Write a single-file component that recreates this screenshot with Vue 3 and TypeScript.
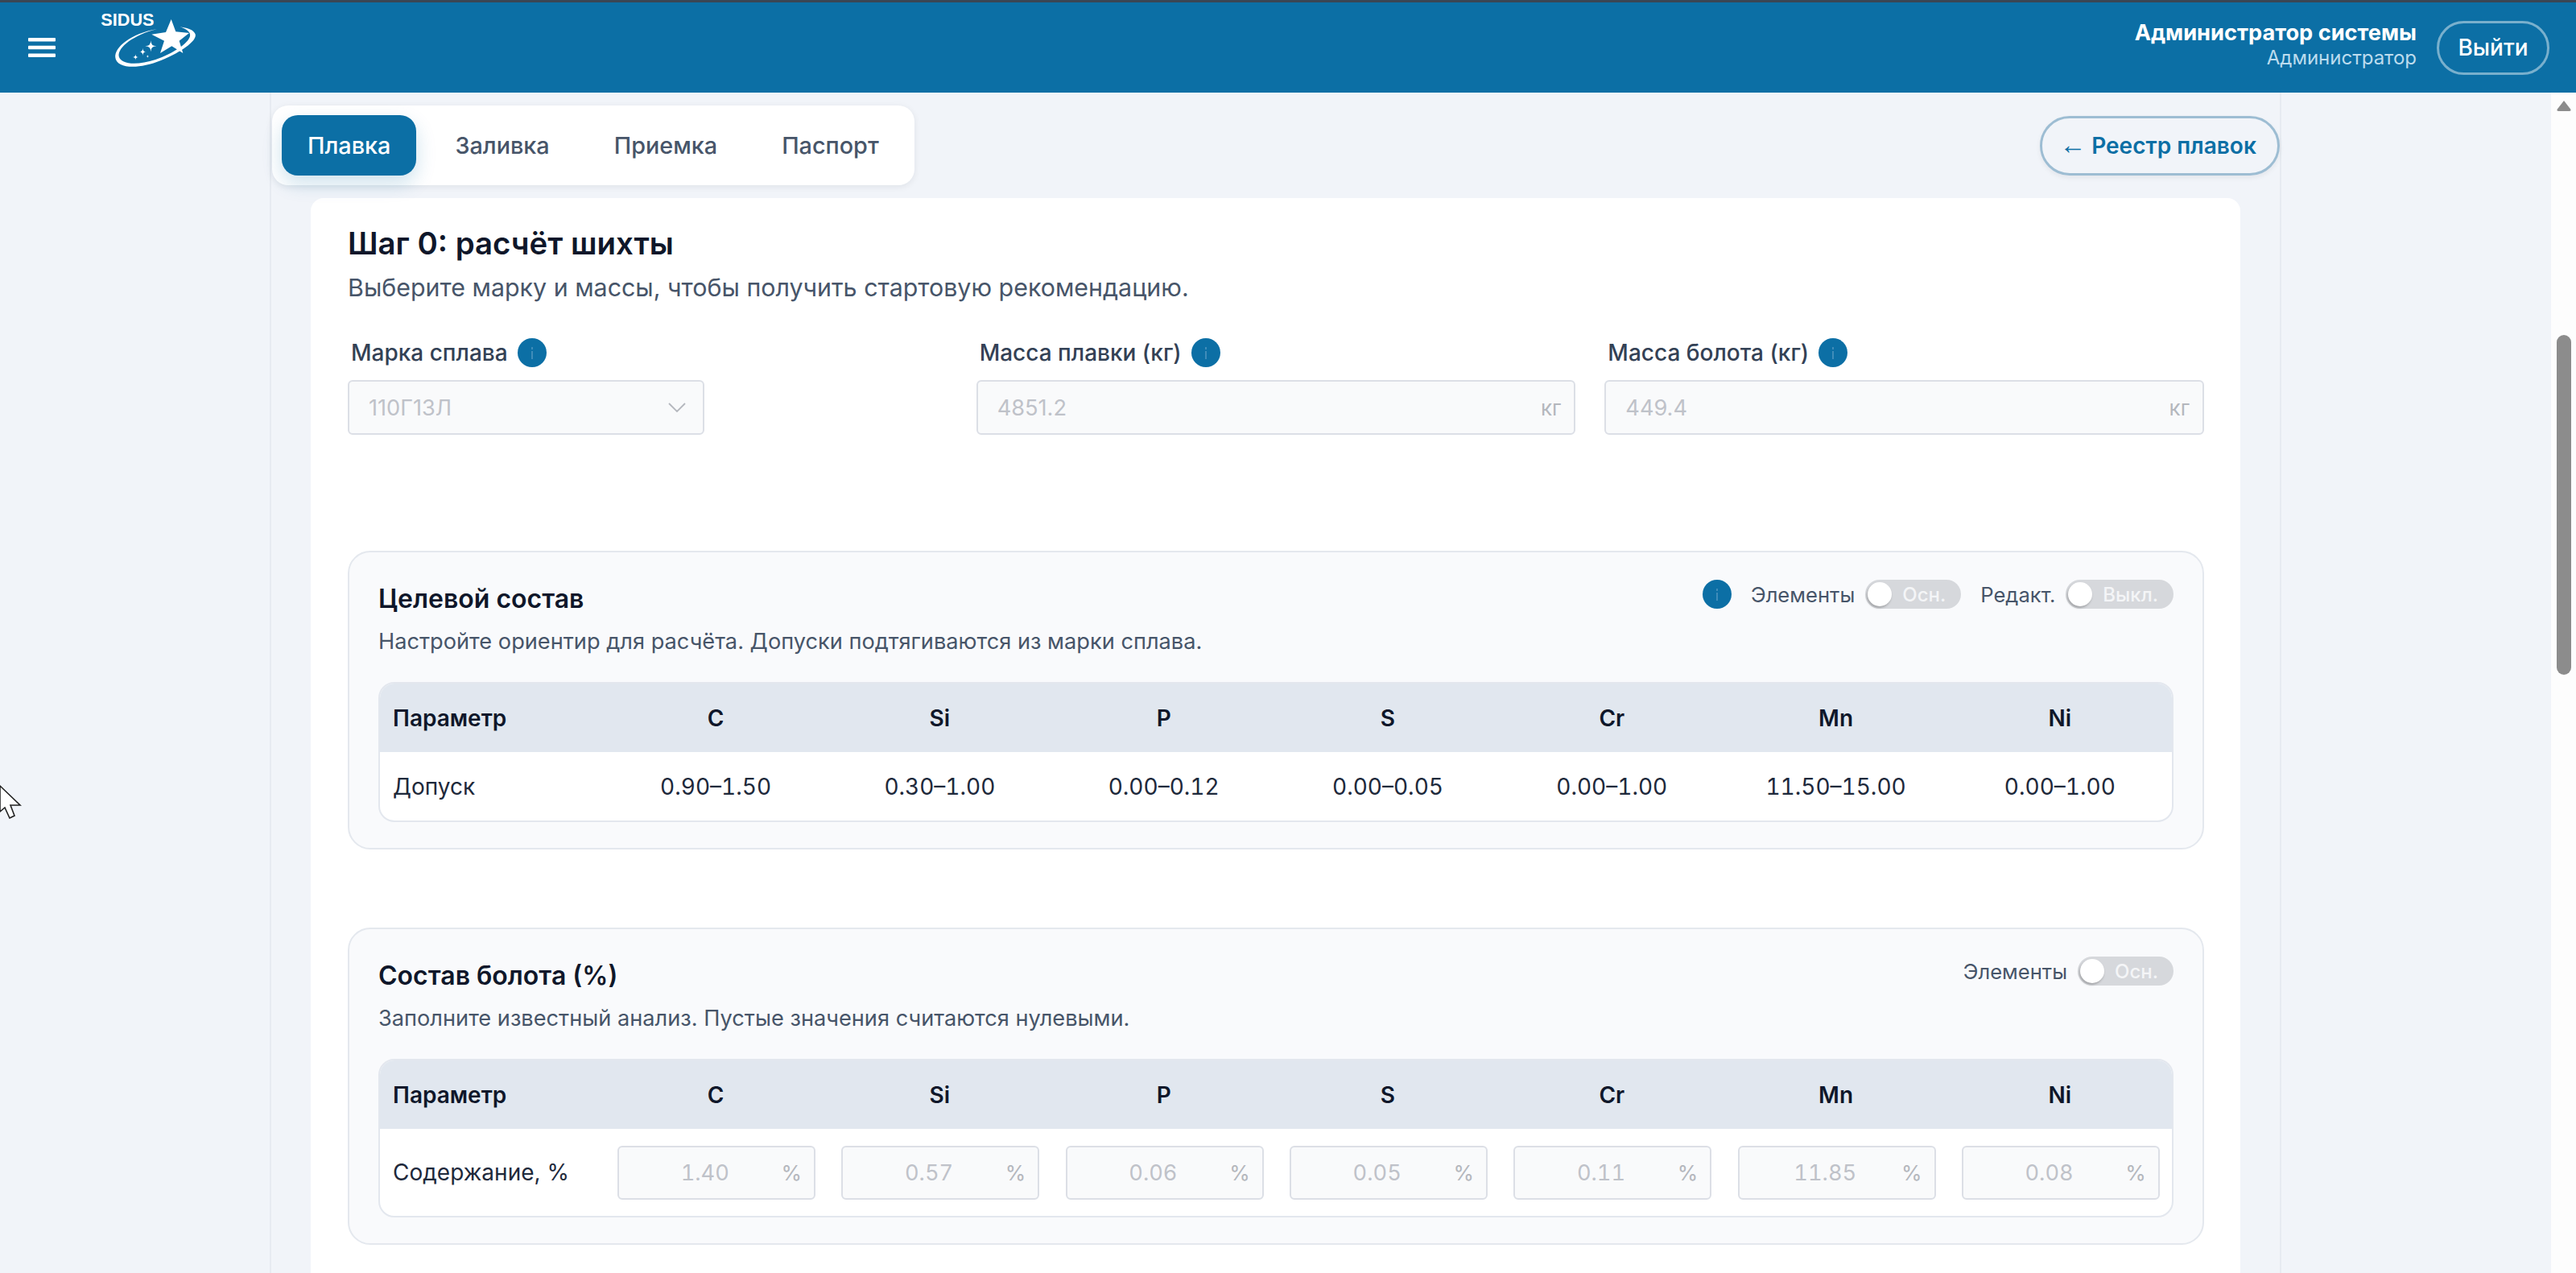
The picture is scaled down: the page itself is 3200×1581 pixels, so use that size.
<script setup lang="ts">
interface Field {
  label: string
  value: string
}

const tabs = ['Плавка', 'Заливка', 'Приемка', 'Паспорт']
const elements = ['C', 'Si', 'P', 'S', 'Cr', 'Mn', 'Ni']
const tolerances = ['0.90–1.50', '0.30–1.00', '0.00–0.12', '0.00–0.05', '0.00–1.00', '11.50–15.00', '0.00–1.00']
const swampValues = ['1.40', '0.57', '0.06', '0.05', '0.11', '11.85', '0.08']
const masses: Field[] = [
  { label: 'Масса плавки (кг)', value: '4851.2' },
  { label: 'Масса болота (кг)', value: '449.4' },
]

const sparkle = (x: number, y: number, r: number) =>
  `M${x} ${y - r}Q${x} ${y} ${x + r} ${y}Q${x} ${y} ${x} ${y + r}Q${x} ${y} ${x - r} ${y}Q${x} ${y} ${x} ${y - r}Z`
const sparkles = [sparkle(262, 172, 21), sparkle(232, 193, 14), sparkle(205, 213, 11), sparkle(250, 210, 5)]
</script>

<template>
  <div class="app">
    <header class="topbar">
      <div class="brand">
        <svg class="burger" width="34" height="24" viewBox="0 0 34 24">
          <rect y="0" width="34" height="4.5" rx="1" fill="#fff" />
          <rect y="9.7" width="34" height="4.5" rx="1" fill="#fff" />
          <rect y="19.5" width="34" height="4.5" rx="1" fill="#fff" />
        </svg>
        <svg class="logo" width="200" height="110" viewBox="0 0 600 330">
          <text x="76" y="97" class="logo-text">SIDUS</text>
          <path
            d="M285 108C190 125 125 175 130 215C135 255 215 260 300 225C380 192 445 145 425 122C415 108 390 103 370 100C395 108 412 120 408 135C403 160 345 200 280 222C210 245 150 240 143 210C138 175 200 130 285 108Z"
            fill="#fff"
          />
          <polygon
            points="338,72 355,118 405,123 368,152 382,198 340,172 297,198 312,152 265,128 318,120"
            fill="#fff"
          />
          <path v-for="d in sparkles" :key="d" :d="d" fill="#fff" />
        </svg>
      </div>
      <div class="user">
        <div class="user-info">
          <div class="user-name">Администратор системы</div>
          <div class="user-role">Администратор</div>
        </div>
        <button class="logout">Выйти</button>
      </div>
    </header>

    <div class="body">
      <div class="scroll-area">
        <div class="shell">
          <div class="toolbar">
            <nav class="tabs">
              <button
                v-for="(tab, index) in tabs"
                :key="tab"
                class="tab"
                :class="{ active: index === 0 }"
              >
                {{ tab }}
              </button>
            </nav>
            <button class="back"><span class="back-arrow">←</span> Реестр плавок</button>
          </div>

          <main class="card">
            <h1 class="title">Шаг 0: расчёт шихты</h1>
            <p class="subtitle">Выберите марку и массы, чтобы получить стартовую рекомендацию.</p>

            <div class="form">
              <div class="field">
                <div class="label">
                  Марка сплава
                  <svg class="info" viewBox="0 0 36 36"><circle cx="18" cy="18" r="18" fill="#0c6fa5" /><rect x="17" y="11" width="2" height="3" fill="#3f8cb9" /><rect x="17" y="16" width="2" height="10" fill="#3f8cb9" /></svg>
                </div>
                <div class="control select">
                  <span>110Г13Л</span>
                  <svg width="22" height="12" viewBox="0 0 22 12" fill="none" stroke="#b4b7bd" stroke-width="1.8"><polyline points="1,1 11,11 21,1" /></svg>
                </div>
              </div>
              <div v-for="mass in masses" :key="mass.label" class="field">
                <div class="label">
                  {{ mass.label }}
                  <svg class="info" viewBox="0 0 36 36"><circle cx="18" cy="18" r="18" fill="#0c6fa5" /><rect x="17" y="11" width="2" height="3" fill="#3f8cb9" /><rect x="17" y="16" width="2" height="10" fill="#3f8cb9" /></svg>
                </div>
                <div class="control">
                  <span>{{ mass.value }}</span>
                  <span class="unit">кг</span>
                </div>
              </div>
            </div>

            <section class="panel first">
              <div class="panel-head">
                <div>
                  <h2 class="panel-title">Целевой состав</h2>
                  <p class="panel-sub">Настройте ориентир для расчёта. Допуски подтягиваются из марки сплава.</p>
                </div>
                <div class="switches">
                  <svg class="info wide" viewBox="0 0 36 36"><circle cx="18" cy="18" r="18" fill="#0c6fa5" /><rect x="17" y="11" width="2" height="3" fill="#3f8cb9" /><rect x="17" y="16" width="2" height="10" fill="#3f8cb9" /></svg>
                  <span class="switch-label">Элементы</span>
                  <span class="switch"><i class="knob"></i>Осн.</span>
                  <span class="switch-label second">Редакт.</span>
                  <span class="switch"><i class="knob"></i>Выкл.</span>
                </div>
              </div>
              <div class="table">
                <div class="row head">
                  <div class="cell name">Параметр</div>
                  <div v-for="el in elements" :key="el" class="cell">{{ el }}</div>
                </div>
                <div class="row">
                  <div class="cell name">Допуск</div>
                  <div v-for="(item, index) in tolerances" :key="index" class="cell num">{{ item }}</div>
                </div>
              </div>
            </section>

            <section class="panel">
              <div class="panel-head">
                <div>
                  <h2 class="panel-title">Состав болота (%)</h2>
                  <p class="panel-sub">Заполните известный анализ. Пустые значения считаются нулевыми.</p>
                </div>
                <div class="switches">
                  <span class="switch-label">Элементы</span>
                  <span class="switch"><i class="knob"></i>Осн.</span>
                </div>
              </div>
              <div class="table">
                <div class="row head">
                  <div class="cell name">Параметр</div>
                  <div v-for="el in elements" :key="el" class="cell">{{ el }}</div>
                </div>
                <div class="row tall">
                  <div class="cell name">Содержание, %</div>
                  <div v-for="(item, index) in swampValues" :key="index" class="cell">
                    <div class="percent">
                      <span class="percent-value">{{ item }}</span>
                      <span class="percent-unit">%</span>
                    </div>
                  </div>
                </div>
              </div>
            </section>
          </main>
        </div>
      </div>

      <aside class="scrollbar">
        <svg class="scroll-arrow" width="18" height="14" viewBox="0 0 18 14"><path d="M9 1L17.5 12Q18 14 16 14H2Q0 14 .5 12Z" fill="#8c8c8c" /></svg>
        <div class="scroll-thumb"></div>
      </aside>
    </div>

    <svg class="cursor" width="28" height="42" viewBox="0 0 28 42">
      <path d="M0 1L25 25H13L18 38L12 41L6 28L0 33Z" fill="#fff" stroke="#222" stroke-width="1.6" />
    </svg>
  </div>
</template>

<style>
html,
body {
  margin: 0;
  overflow: hidden;
}
</style>

<style scoped>
.app {
  position: relative;
  display: flex;
  flex-direction: column;
  height: 1581px;
  overflow: hidden;
  background: #f1f4f9;
  font-family: Inter, 'Liberation Sans', sans-serif;
  color: #0f172a;
}

.topbar {
  flex: none;
  box-sizing: border-box;
  height: 115px;
  display: flex;
  align-items: center;
  justify-content: space-between;
  background: #0c6fa5;
  border-top: 3px solid #3a4654;
  padding: 0 33px 0 35px;
}

.brand {
  display: flex;
  align-items: flex-start;
  height: 112px;
}

.burger {
  margin: 44px 31px 0 0;
}

.logo {
  margin-top: -3px;
}

.logo-text {
  font-family: 'Liberation Sans', Arial, sans-serif;
  font-weight: 700;
  font-size: 65px;
  fill: #fff;
}

.user {
  display: flex;
  align-items: center;
  gap: 25px;
}

.user-info {
  padding-bottom: 11px;
  text-align: right;
}

.user-name {
  font-size: 27.2px;
  line-height: 36px;
  font-weight: 700;
  color: #fff;
}

.user-role {
  font-size: 24px;
  line-height: 26px;
  color: #bcdcee;
}

.logout {
  height: 67px;
  width: 140px;
  border: 3px solid rgba(255, 255, 255, 0.45);
  border-radius: 34px;
  background: transparent;
  color: #fff;
  font: 500 28px Inter, sans-serif;
  padding: 0;
}

.body {
  flex: 1;
  display: flex;
  min-height: 0;
}

.scroll-area {
  flex: 1;
  min-width: 0;
  overflow: hidden;
}

.shell {
  box-sizing: border-box;
  width: 2499px;
  height: 100%;
  margin: 0 auto;
  padding-top: 16px;
  border-left: 2px solid #e7ebf1;
  border-right: 2px solid #e7ebf1;
}

.toolbar {
  display: flex;
  align-items: center;
  justify-content: space-between;
}

.tabs {
  display: flex;
  gap: 16px;
  margin-left: 1px;
  padding: 12px 12px;
  background: #fff;
  border-radius: 20px;
  box-shadow: 0 2px 8px rgba(15, 23, 42, 0.08);
}

.tab {
  height: 75px;
  padding: 0 32px;
  border: 0;
  border-radius: 20px;
  background: transparent;
  color: #475569;
  font: 500 28.8px Inter, sans-serif;
}

.tab.active {
  background: #0c6fa5;
  color: #fff;
  box-shadow: 0 10px 24px rgba(12, 111, 165, 0.2);
}

.back {
  height: 74px;
  width: 298px;
  padding: 0;
  border: 3px solid #9dbdd3;
  border-radius: 37px;
  background: #f1f4f9;
  color: #0c6fa5;
  font: 600 28px Inter, sans-serif;
  box-shadow: 0 3px 6px rgba(15, 23, 42, 0.06);
}

.back-arrow {
  margin-left: -5px;
  font-family: 'Liberation Sans', sans-serif;
  font-size: 33px;
  line-height: 1;
  font-weight: 400;
}

.card {
  margin: 16px 49px 0;
  height: 1320px;
  padding: 31px 45px 0 46px;
  background: #fff;
  border-radius: 16px 16px 0 0;
}

.title {
  margin: 0;
  font-size: 38.4px;
  line-height: 50px;
  font-weight: 600;
}

.subtitle {
  margin: 10px 0 0;
  font-size: 30.4px;
  line-height: 40px;
  color: #475569;
}

.form {
  display: grid;
  grid-template-columns: repeat(3, 1fr);
  gap: 36px;
  margin-top: 43px;
}

.label {
  display: flex;
  align-items: center;
  gap: 12px;
  height: 36px;
  padding-left: 4px;
  font-size: 28px;
  font-weight: 500;
  color: #334155;
}

.info {
  flex: none;
  width: 36px;
  height: 36px;
}

.control {
  box-sizing: border-box;
  display: flex;
  align-items: center;
  justify-content: space-between;
  height: 68px;
  margin-top: 16px;
  padding: 0 16px 0 24px;
  background: #f9fafb;
  border: 2px solid #dcdfe6;
  border-radius: 6px;
  font-size: 27.2px;
  color: #bfc2c9;
}

.select {
  width: 443px;
  padding-right: 21px;
}

.unit {
  color: #b4b7bd;
  font-size: 26px;
}

.panel {
  margin-top: 97px;
  padding: 35px 36px 32px;
  background: #f9fafc;
  border: 2px solid #e4e8ee;
  border-radius: 28px;
}

.panel.first {
  margin-top: 144px;
}

.panel-head {
  display: flex;
  justify-content: space-between;
  align-items: flex-start;
  height: 96px;
  margin-bottom: 30px;
}

.panel-title {
  margin: 0;
  font-size: 32px;
  line-height: 46px;
  font-weight: 600;
}

.panel-sub {
  margin: 10px 0 0;
  font-size: 27.2px;
  line-height: 40px;
  color: #475569;
}

.switches {
  display: flex;
  align-items: center;
  height: 36px;
  margin-top: -1px;
  font-size: 25.6px;
  color: #475569;
}

.info.wide {
  margin-right: 24px;
}

.switch-label {
  margin-right: 13px;
}

.switch-label.second {
  margin-left: 24px;
}

.switch {
  position: relative;
  box-sizing: border-box;
  display: inline-flex;
  align-items: center;
  height: 36px;
  padding: 0 19px 0 46px;
  border-radius: 18px;
  background: #d6d8dc;
  color: #f4f5f7;
  font-size: 24px;
  font-weight: 500;
}

.knob {
  position: absolute;
  left: 3px;
  top: 3px;
  width: 30px;
  height: 30px;
  border-radius: 50%;
  background: #fff;
  box-shadow: -1px 2px 3px rgba(0, 0, 0, 0.25);
}

.table {
  border: 2px solid #e3e7ee;
  border-radius: 20px;
  overflow: hidden;
  background: #fff;
}

.row {
  display: grid;
  grid-template-columns: 1fr repeat(7, 278.3px);
  align-items: center;
  height: 85px;
  font-size: 28px;
  color: #1e293b;
}

.row.head {
  background: #e1e7ef;
  font-weight: 600;
  color: #0f172a;
}

.row.tall {
  height: 108px;
}

.cell {
  text-align: center;
}

.cell.num {
  font-variant-numeric: tabular-nums;
}

.cell.name {
  padding-left: 16px;
  text-align: left;
}

.percent {
  box-sizing: border-box;
  display: flex;
  align-items: center;
  width: 246px;
  height: 67px;
  margin: 0 auto;
  padding: 0 15px 0 22px;
  background: #f9fafb;
  border: 2px solid #dcdfe6;
  border-radius: 6px;
  color: #bfc2c9;
  font-size: 27.2px;
  font-variant-numeric: tabular-nums;
  transform: translateX(1px);
}

.percent-value {
  flex: 1;
  padding-right: 10px;
  text-align: center;
}

.percent-unit {
  color: #b4b7bd;
  font-size: 26px;
}

.scrollbar {
  flex: none;
  box-sizing: border-box;
  width: 31px;
  padding: 9px 6px 0 7px;
  background: #fdfdfd;
}

.scroll-arrow {
  display: block;
}

.scroll-thumb {
  width: 18px;
  height: 422px;
  margin-top: 278px;
  border-radius: 9px;
  background: #8c8c8c;
}

.cursor {
  position: absolute;
  left: 0;
  top: 975px;
}
</style>
